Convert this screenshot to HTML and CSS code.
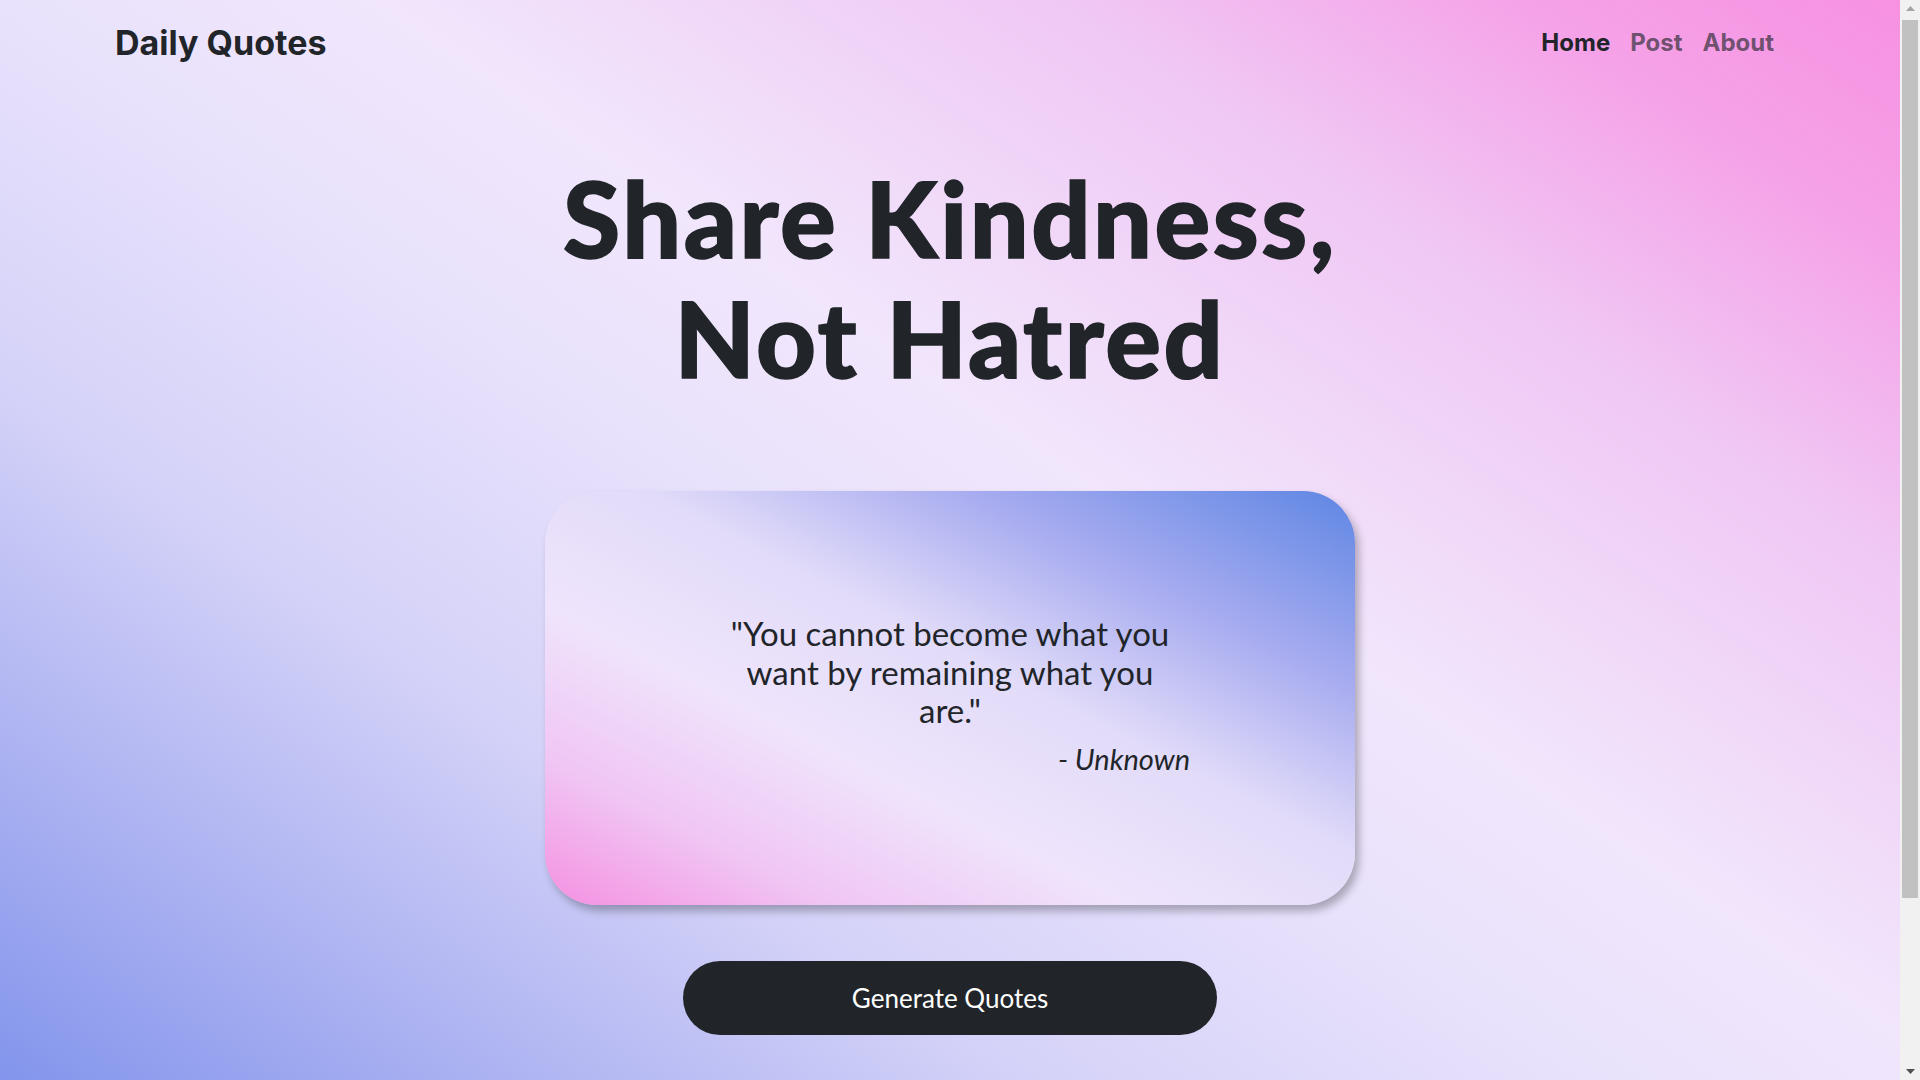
FILE: index.html
```html
<!DOCTYPE html>
<html lang="en">
<head>
<meta charset="utf-8">
<title>Daily Quotes</title>
<link rel="stylesheet" href="styles.css">
</head>
<body>
<div class="page">
  <header class="navbar">
    <a class="brand" href="#">Daily Quotes</a>
    <nav class="nav">
      <a class="nav-link active" href="#">Home</a>
      <a class="nav-link" href="#">Post</a>
      <a class="nav-link" href="#">About</a>
    </nav>
  </header>
  <main class="hero">
    <h1 class="title">Share Kindness,<br>Not Hatred</h1>
    <section class="card">
      <div class="quote-box">
        <p class="quote">"You cannot become what you want by remaining what you are."</p>
        <p class="author">- Unknown</p>
      </div>
    </section>
    <button class="btn" type="button">Generate Quotes</button>
  </main>
</div>
<div class="scrollbar" aria-hidden="true">
  <div class="sb-btn">
    <svg width="9" height="5" viewBox="0 0 9 5"><polygon points="0,5 4.5,0 9,5" fill="#a3a3a3"/></svg>
  </div>
  <div class="sb-track">
    <div class="sb-thumb"></div>
  </div>
  <div class="sb-btn">
    <svg width="9" height="5" viewBox="0 0 9 5"><polygon points="0,0 4.5,5 9,0" fill="#505050"/></svg>
  </div>
</div>
</body>
</html>
```

FILE: styles.css
```css
html, body {
  margin: 0;
  padding: 0;
}
body {
  font-family: Lato, "Open Sans", sans-serif;
  color: #212529;
}
.page {
  width: calc(100% - 20px);
  min-height: 1285px;
  background: linear-gradient(to top right, #6882e8 0%, #a9b0f1 20%, #d4d2f8 35%, #e9e2fc 50%, #f1e6fc 60%, #f0c8f4 78%, #f5a2e8 90%, #f792e1 100%);
}
.scrollbar {
  position: fixed;
  top: 0;
  right: 0;
  width: 20px;
  height: 100vh;
  background: #f1f1f1;
  display: flex;
  flex-direction: column;
}
.sb-btn {
  height: 17px;
  flex: none;
  display: flex;
  align-items: center;
  justify-content: center;
}
.sb-track {
  flex: 1;
  padding: 0 2px;
}
.sb-thumb {
  height: 878px;
  margin-top: 3px;
  background: #c1c1c1;
}
.navbar {
  height: 84px;
  padding: 0 118px 0 115px;
  display: flex;
  align-items: center;
  justify-content: space-between;
}
.brand {
  font-family: Inter, "Open Sans", sans-serif;
  font-weight: 700;
  font-size: 34px;
  color: #212529;
  text-decoration: none;
}
.nav {
  display: flex;
}
.nav-link {
  font-family: Inter, "Open Sans", sans-serif;
  font-weight: 700;
  font-size: 24px;
  padding: 0 10px;
  text-decoration: none;
  color: rgba(33, 37, 41, 0.65);
}
.nav-link:last-child {
  padding-right: 8px;
}
.nav-link.active {
  color: #212529;
}
.hero {
  display: flex;
  flex-direction: column;
  align-items: center;
}
.title {
  margin: 74px 0 0;
  font-weight: 900;
  font-size: 104px;
  line-height: 120px;
  text-align: center;
  letter-spacing: 2.5px;
  -webkit-text-stroke: 1.5px #212529;
}
.card {
  margin-top: 93px;
  width: 810px;
  height: 414px;
  box-sizing: border-box;
  padding-bottom: 6px;
  border-radius: 52px;
  background: linear-gradient(to top right, #f590e1 0%, #f0c6f4 18%, #efe4fc 36%, #e2dcf9 56%, #a8acf0 76%, #5e86e3 100%);
  box-shadow: 4px 6px 8px rgba(0, 0, 0, 0.28);
  display: flex;
  align-items: center;
  justify-content: center;
}
.quote-box {
  width: 480px;
}
.quote {
  margin: 0 auto;
  max-width: 450px;
  font-size: 33px;
  line-height: 38.4px;
  text-align: center;
}
.author {
  margin: 13px 0 0;
  font-size: 29px;
  line-height: 33.6px;
  font-style: italic;
  text-align: right;
}
.btn {
  margin-top: 56px;
  width: 534px;
  height: 74px;
  border: none;
  border-radius: 37px;
  background: #212529;
  color: #fff;
  font-family: Lato, "Open Sans", sans-serif;
  font-size: 26px;
  cursor: pointer;
}
```
